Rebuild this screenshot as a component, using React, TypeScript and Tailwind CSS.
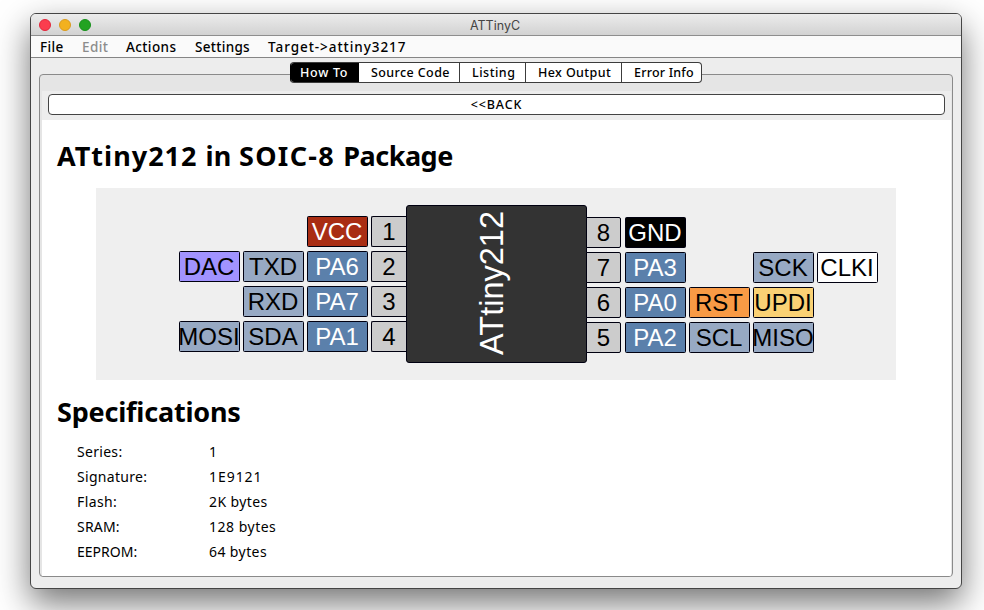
import React from "react";

const menus = [
  { label: "File", box: "w-[42px]", text: "tracking-[0.4px]" },
  { label: "Edit", box: "w-[44px]", text: "tracking-[0.4px] text-[#8c8c8c]" },
  { label: "Actions", box: "w-[69px]", text: "tracking-[0.4px]" },
  { label: "Settings", box: "w-[73px]", text: "tracking-[0.3px]" },
  { label: "Target->attiny3217", box: "w-[160px]", text: "tracking-[0.95px]" },
];

const tabs = [
  { label: "How To", box: "w-[68px] bg-black text-white pl-[9px]", text: "tracking-[0.7px]" },
  { label: "Source Code", box: "w-[101px] border-r border-[#3c3c3c] pl-[12px]", text: "tracking-[0.4px]" },
  { label: "Listing", box: "w-[66px] border-r border-[#3c3c3c] pl-[12px]", text: "tracking-[0.5px]" },
  { label: "Hex Output", box: "w-[96px] border-r border-[#3c3c3c] pl-[12px]", text: "tracking-[0.4px]" },
  { label: "Error Info", box: "w-[79px] pl-[12px]", text: "tracking-[0.2px]" },
];

const specs = [
  { name: "Series:", nameText: "tracking-[0.3px]", value: "1", valueText: "" },
  { name: "Signature:", nameText: "tracking-[0.3px]", value: "1E9121", valueText: "tracking-[0.95px]" },
  { name: "Flash:", nameText: "tracking-[0.4px]", value: "2K bytes", valueText: "tracking-[0.4px]" },
  { name: "SRAM:", nameText: "tracking-[0.2px]", value: "128 bytes", valueText: "tracking-[0.5px]" },
  { name: "EEPROM:", nameText: "", value: "64 bytes", valueText: "tracking-[0.4px]" },
];

const tones = {
  power: "bg-[#a92d13] text-white",
  ground: "bg-black text-white",
  port: "bg-[#5b80ab] text-white",
  bus: "bg-[#97a9c3] text-black",
  dac: "bg-[#a193ff] text-black",
  clock: "bg-white text-black",
  reset: "bg-[#f89a45] text-black",
  updi: "bg-[#fad174] text-black",
  blank: "invisible",
};

type Tone = keyof typeof tones;
type Tag = [string, Tone];

const leftPins: { pin: number; tags: Tag[] }[] = [
  { pin: 1, tags: [["VCC", "power"]] },
  { pin: 2, tags: [["DAC", "dac"], ["TXD", "bus"], ["PA6", "port"]] },
  { pin: 3, tags: [["RXD", "bus"], ["PA7", "port"]] },
  { pin: 4, tags: [["MOSI", "bus"], ["SDA", "bus"], ["PA1", "port"]] },
];

const rightPins: { pin: number; tags: Tag[] }[] = [
  { pin: 8, tags: [["GND", "ground"]] },
  { pin: 7, tags: [["PA3", "port"], ["", "blank"], ["SCK", "bus"], ["CLKI", "clock"]] },
  { pin: 6, tags: [["PA0", "port"], ["RST", "reset"], ["UPDI", "updi"]] },
  { pin: 5, tags: [["PA2", "port"], ["SCL", "bus"], ["MISO", "bus"]] },
];

function PinTag({ tag: [label, tone] }: { tag: Tag }) {
  return (
    <div className={`flex h-[31px] w-[61px] shrink-0 items-center justify-center rounded-[1.5px] border border-[#000010] pr-px whitespace-nowrap ${tones[tone]}`}>
      {label}
    </div>
  );
}

function PinNumber({ pin, side }: { pin: number; side: "left" | "right" }) {
  return (
    <div
      className={`flex h-[31px] w-[35px] shrink-0 items-center justify-center border border-[#000010] bg-[#cccccc] ${
        side === "left" ? "rounded-l-[2px] border-r-0" : "ml-[-1px] rounded-r-[2px]"
      }`}
    >
      {pin}
    </div>
  );
}

function Pinout() {
  return (
    <div className="ml-[54px] flex h-[192px] w-[800px] bg-[#efefef] font-['Liberation_Sans',Arial,sans-serif] text-[24px] leading-none">
      <div className="flex w-[310px] flex-col gap-[4px] pt-[28px]">
        {leftPins.map(({ pin, tags }) => (
          <div key={pin} className="flex justify-end gap-[3px]">
            {tags.map((tag) => <PinTag key={tag[0]} tag={tag} />)}
            <PinNumber pin={pin} side="left" />
          </div>
        ))}
      </div>
      <div className="mt-[17px] flex h-[158px] w-[181px] items-center justify-center rounded-[3px] border border-[#000010] bg-[#333333]">
        <span className="rotate-180 pt-[2px] pl-[8px] text-[32.5px] text-white [writing-mode:vertical-rl]">ATtiny212</span>
      </div>
      <div className="flex flex-col gap-[4px] pt-[29px]">
        {rightPins.map(({ pin, tags }) => (
          <div key={pin} className="flex gap-[4px]">
            <PinNumber pin={pin} side="right" />
            <div className="flex gap-[3px]">
              {tags.map((tag, i) => <PinTag key={i} tag={tag} />)}
            </div>
          </div>
        ))}
      </div>
    </div>
  );
}

export default function App() {
  return (
    <div className="h-[610px] w-[984px] overflow-hidden bg-white pt-[13px] pl-[30px] font-['Noto_Sans','Open_Sans',sans-serif] text-[13px] leading-none text-black">
      <div className="flex h-[576px] w-[932px] flex-col overflow-hidden rounded-[6px] border border-[#454545] bg-[#ededed] shadow-[0_14px_34px_rgba(0,0,0,0.55)]">
        <header className="grid h-[22px] shrink-0 grid-cols-[1fr_auto_1fr] items-center border-b border-[#8e8e8e] bg-linear-to-b from-[#ececec] to-[#d2d2d2]">
          <div className="flex gap-[8px] pl-[8px]">
            <i className="size-[12px] rounded-full border border-[#e2263b] bg-[#fb3d4e]" />
            <i className="size-[12px] rounded-full border border-[#d99a1d] bg-[#f2b11f]" />
            <i className="size-[12px] rounded-full border border-[#16901a] bg-[#23a322]" />
          </div>
          <h1 className="mr-[2px] pt-[3px] font-[Inter,Roboto,sans-serif] text-[12.5px] text-[#444444]">ATTinyC</h1>
          <span />
        </header>

        <nav className="flex h-[22px] shrink-0 items-center border-b border-[#858585] bg-[#fafafa] pt-[2px] pl-[9px] text-[13.5px] font-medium">
          {menus.map((m) => (
            <div key={m.label} className={`shrink-0 whitespace-nowrap ${m.box}`}>
              <span className={m.text}>{m.label}</span>
            </div>
          ))}
        </nav>

        <main className="flex flex-1 flex-col px-[8px] pt-[4px] pb-[11px]">
          <div className="z-10 mb-[-9px] ml-[251px] flex h-[21px] w-[412px] shrink-0 overflow-hidden rounded-[4px] border border-[#3c3c3c] border-l-black bg-white text-[12.5px] font-medium">
            {tabs.map((t) => (
              <div key={t.label} className={`flex shrink-0 items-center pt-[2px] whitespace-nowrap ${t.box}`}>
                <span className={t.text}>{t.label}</span>
              </div>
            ))}
          </div>

          <section className="flex flex-1 flex-col overflow-hidden rounded-[4px] border border-[#8a8a8a] bg-[#e5e5e5] pt-[16px] pr-[1px] pl-[2px]">
            <div className="h-[29px] shrink-0 bg-[#ededed] px-[6px] pt-[3px]">
              <button className="flex h-[21px] w-full items-center justify-center rounded-[4px] border border-[#444444] bg-white pt-[2px] text-[12.5px] font-medium">
                <span className="tracking-[0.85px]">&lt;&lt;BACK</span>
              </button>
            </div>
            <article className="flex-1 bg-white">
              <h2 className="flex h-[68px] items-center pt-[2px] pl-[15px] text-[27px] font-bold whitespace-nowrap">
                <span>
                  <span className="tracking-[1px]">ATtiny212 </span>
                  <span className="tracking-[0.3px]">in </span>
                  <span className="tracking-[1.3px]">SOIC-8 </span>
                  <span className="tracking-[-0.5px]">Package</span>
                </span>
              </h2>
              <Pinout />
              <h2 className="flex h-[60px] items-center pt-[2px] pl-[15px] text-[27px] font-bold">
                <span className="tracking-[-0.2px]">Specifications</span>
              </h2>
              <dl className="grid grid-cols-[132px_200px] pl-[35px] text-[14px]">
                {specs.map((s) => (
                  <React.Fragment key={s.name}>
                    <dt className="flex h-[25px] items-center pb-px"><span className={s.nameText}>{s.name}</span></dt>
                    <dd className="flex h-[25px] items-center pb-px"><span className={s.valueText}>{s.value}</span></dd>
                  </React.Fragment>
                ))}
              </dl>
            </article>
          </section>
        </main>
      </div>
    </div>
  );
}
